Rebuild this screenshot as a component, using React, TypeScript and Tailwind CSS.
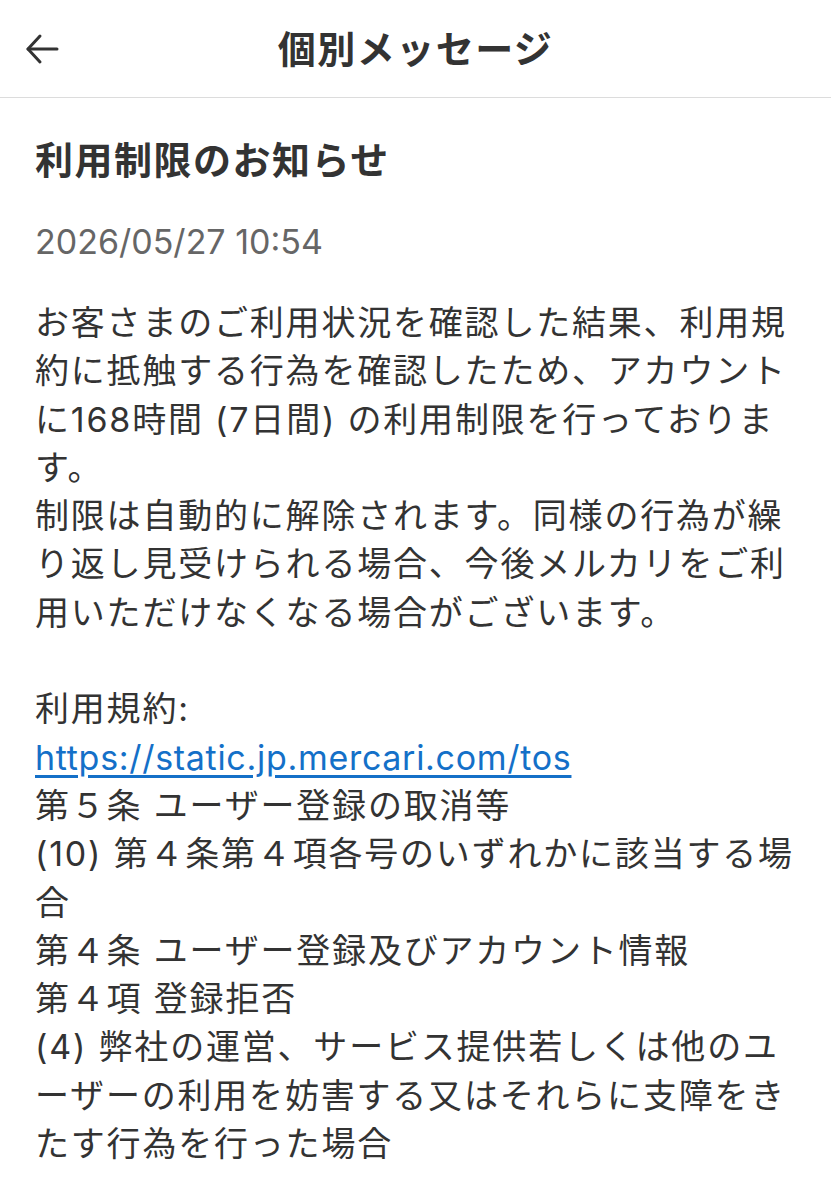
const body = [
  'お客さまのご利用状況を確認した結果、利用規',
  '約に抵触する行為を確認したため、アカウント',
  'に168時間 (7日間) の利用制限を行っておりま',
  'す。',
  '制限は自動的に解除されます。同様の行為が繰',
  'り返し見受けられる場合、今後メルカリをご利',
  '用いただけなくなる場合がございます。',
  '',
  '利用規約:',
]

const tail = [
  '第５条 ユーザー登録の取消等',
  '(10) 第４条第４項各号のいずれかに該当する場',
  '合',
  '第４条 ユーザー登録及びアカウント情報',
  '第４項 登録拒否',
  '(4) 弊社の運営、サービス提供若しくは他のユ',
  'ーザーの利用を妨害する又はそれらに支障をき',
  'たす行為を行った場合',
]

function BackArrow() {
  return (
    <svg viewBox="0 0 36 36" className="w-[36px] h-[36px]" fill="none" stroke="#333" strokeWidth="3" strokeLinecap="round" strokeLinejoin="round">
      <path d="M33 18 H4" />
      <path d="M16 5 L4 18 L16 31" />
    </svg>
  )
}

export default function App() {
  return (
    <div className="w-[831px] min-h-[1200px] bg-white text-[#333]" style={{ fontFamily: "Inter, 'Noto Sans CJK JP', sans-serif" }}>
      {/* Header */}
      <header className="h-[98px] flex items-center border-b border-[#dcdcdc]">
        <div className="w-[60px] pl-[24px] flex items-center">
          <BackArrow />
        </div>
        <h1 className="flex-1 text-center text-[38px] font-bold leading-none tracking-[1.5px]">個別メッセージ</h1>
        <div className="w-[60px]" />
      </header>

      <main className="px-[35px]">
        <h2 className="mt-[36px] text-[38px] font-bold leading-[52px] tracking-[1.5px]">利用制限のお知らせ</h2>
        <p className="mt-[34px] text-[34px] leading-[44px] text-[#666]">2026/05/27 10:54</p>

        <div className="mt-[35px] text-[34px] leading-[48.3px] tracking-[1.8px] whitespace-nowrap">
          {body.map((line, i) => (
            <div key={i} className="h-[48.3px]">{line}</div>
          ))}
          <div className="h-[48.3px]">
            <a href="#" className="text-[#1470c8] underline underline-offset-[5px] tracking-[0.7px]">
              https://static.jp.mercari.com/tos
            </a>
          </div>
          {tail.map((line, i) => (
            <div key={i} className="h-[48.3px]">{line}</div>
          ))}
        </div>
      </main>
    </div>
  )
}
